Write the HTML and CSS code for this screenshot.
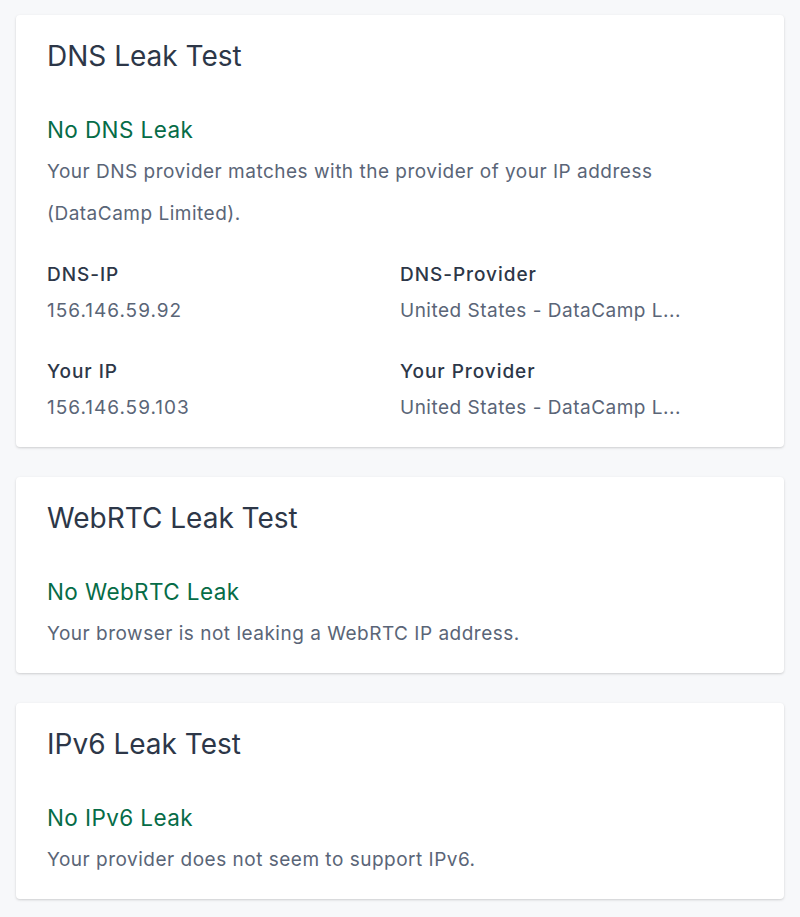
FILE: index.html
```html
<!DOCTYPE html>
<html lang="en">
<head>
<meta charset="utf-8">
<title>Leak Tests</title>
<link rel="stylesheet" href="styles.css">
</head>
<body>
<main class="page">
  <section class="card">
    <h2 class="card-title">DNS Leak Test</h2>
    <h3 class="status">No DNS Leak</h3>
    <p class="desc">Your DNS provider matches with the provider of your IP address (DataCamp Limited).</p>
    <div class="facts">
      <div class="fact">
        <div class="label">DNS-IP</div>
        <div class="value value-ip">156.146.59.92</div>
      </div>
      <div class="fact">
        <div class="label">DNS-Provider</div>
        <div class="value">United States - DataCamp L...</div>
      </div>
      <div class="fact">
        <div class="label">Your IP</div>
        <div class="value value-ip">156.146.59.103</div>
      </div>
      <div class="fact">
        <div class="label">Your Provider</div>
        <div class="value">United States - DataCamp L...</div>
      </div>
    </div>
  </section>
  <section class="card">
    <h2 class="card-title">WebRTC Leak Test</h2>
    <h3 class="status">No WebRTC Leak</h3>
    <p class="desc">Your browser is not leaking a WebRTC IP address.</p>
  </section>
  <section class="card">
    <h2 class="card-title">IPv6 Leak Test</h2>
    <h3 class="status">No IPv6 Leak</h3>
    <p class="desc">Your provider does not seem to support IPv6.</p>
  </section>
</main>
</body>
</html>
```
FILE: styles.css
```css
html, body {
  margin: 0;
  padding: 0;
  background: #f7f8fa;
}
body {
  font-family: Inter, "Noto Sans", "Liberation Sans", sans-serif;
  color: #2d3748;
}
.page {
  display: flex;
  flex-direction: column;
  gap: 30px;
  padding: 15px 16px 20px;
}
.card {
  background: #ffffff;
  border-radius: 4px;
  box-shadow: 0 1px 3px rgba(0, 0, 0, 0.12), 0 1px 2px rgba(0, 0, 0, 0.06);
  padding: 24px 31px 18px;
}
.card-title {
  margin: 0;
  font-size: 28px;
  line-height: 34px;
  font-weight: 400;
  color: #2d3748;
}
.status {
  margin: 42px 0 6px;
  font-size: 22.5px;
  line-height: 30px;
  font-weight: 400;
  letter-spacing: 0.4px;
  color: #066c47;
}
.desc {
  margin: 0;
  font-size: 19px;
  line-height: 42px;
  letter-spacing: 0.5px;
  color: #5a6577;
}
.facts {
  display: grid;
  grid-template-columns: 1fr 1fr;
  row-gap: 25px;
  margin-top: 25px;
}
.label {
  font-size: 19px;
  line-height: 30px;
  font-weight: 500;
  letter-spacing: 0.95px;
  color: #2d3748;
}
.value {
  font-size: 19px;
  line-height: 42px;
  letter-spacing: 0.5px;
  color: #5a6577;
}
.value-ip {
  letter-spacing: 1px;
}
```
